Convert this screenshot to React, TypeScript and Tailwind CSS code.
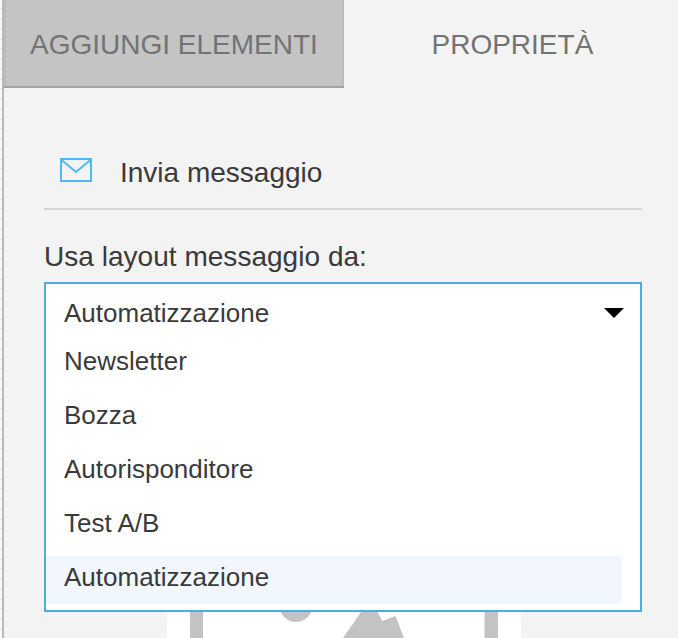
const options = ["Newsletter", "Bozza", "Autorisponditore", "Test A/B", "Automatizzazione"];

function Tabs() {
  return (
    <div className="flex h-[88px] text-[28px] leading-[90px] whitespace-nowrap text-[#737373]">
      <div className="w-[340px] border-b-2 border-[#a5a5a5] bg-[#c4c4c4]">
        <div className="h-[86px] border-x-2 border-[#bababa] pl-6">AGGIUNGI ELEMENTI</div>
      </div>
      <div className="pl-[87.5px]">PROPRIETÀ</div>
    </div>
  );
}

function EnvelopeIcon() {
  return (
    <svg width="32" height="24" viewBox="0 0 32 24" fill="none" stroke="#4db8fb" strokeWidth="2">
      <path d="M1 1h30v22H1z" />
      <path d="M1 1.5l15 12.5 15-12.5" />
    </svg>
  );
}

function LayoutSelect() {
  return (
    <div className="h-[330px] border-2 border-[#49ace5] bg-white text-[26px] text-[#3a3a3a]">
      <div className="flex h-[52px] items-start justify-between pr-4 pl-[18px]">
        <span className="leading-[58px]">Automatizzazione</span>
        <svg className="mt-6" width="20" height="10" viewBox="0 0 20 10">
          <path d="M0 0h20L10 10z" fill="#000" />
        </svg>
      </div>
      <ul className="flex w-[576px] flex-col gap-1.5 pt-1">
        {options.map((option) => (
          <li
            key={option}
            className={`h-12 pl-[18px] leading-[42px] ${option === "Automatizzazione" ? "bg-[#f1f6ff]" : ""}`}
          >
            {option}
          </li>
        ))}
      </ul>
    </div>
  );
}

function PreviewPlaceholder() {
  return (
    <svg className="ml-[123px] block" width="354" height="26" viewBox="0 0 354 26">
      <path d="M0 0h354v26H0z" fill="#fff" />
      <g fill="#c3c3c3">
        <path d="M23 0h13v26H23zM317.5 0h13.5v26h-13.5z" />
        <circle cx="129" cy="-6.2" r="16.2" />
        <path d="M176 26L194 0h16.500l4.700 9 13.300-5 8.500 22z" />
      </g>
    </svg>
  );
}

export default function App() {
  return (
    <div className="flex h-[638px] w-[678px] overflow-hidden bg-[#f3f3f3] font-['Liberation_Sans',Arial,sans-serif]">
      <div className="w-0.5 bg-[repeating-linear-gradient(to_bottom,#f8f8f8_0_8px,#e9e9e9_8px_10px)]" />
      <div className="w-0.5 bg-[#bababa]" />
      <div className="w-[674px]">
        <Tabs />
        <main className="ml-10 w-[598px] text-[28px] text-[#3a3a3a]">
          <header className="flex h-[122px] border-b-2 border-[#d3d3d3] pt-[70px] pl-4">
            <EnvelopeIcon />
            <h1 className="ml-7 leading-[30px]">Invia messaggio</h1>
          </header>
          <p className="h-[72px] pt-8 leading-[30px] tracking-[0.03px]">Usa layout messaggio da:</p>
          <LayoutSelect />
          <PreviewPlaceholder />
        </main>
      </div>
    </div>
  );
}
